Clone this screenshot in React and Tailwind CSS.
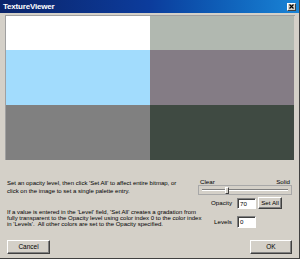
export default function App() {
  const bevel =
    "border border-t-white border-l-white border-b-[#404040] border-r-[#404040] shadow-[inset_-1px_-1px_0_#808080]";
  return (
    <div
      className="w-[300px] h-[259px] bg-[#d4d0c8] flex flex-col border-b border-b-[#404040] border-r border-r-[#404040]"
      style={{ fontFamily: '"Liberation Sans", Arial, sans-serif' }}
    >
      {/* Title bar */}
      <div className="h-[13px] flex items-center justify-between pl-[3px] pr-[3px] bg-gradient-to-r from-[#0a246a] via-[#0c3c9c] to-[#1a84d6]">
        <span className="text-white font-bold text-[8px] leading-none tracking-[-0.2px]">TextureViewer</span>
        <div className="w-[9px] h-[8px] bg-[#d4d0c8] border border-t-white border-l-white border-b-[#404040] border-r-[#404040] flex items-center justify-center">
          <svg width="5" height="5" viewBox="0 0 5 5">
            <path d="M0.5 0.5 L4.5 4.5 M4.5 0.5 L0.5 4.5" stroke="black" strokeWidth="1.2" />
          </svg>
        </div>
      </div>

      {/* Image area */}
      <div className="ml-[5px] mt-[2px] w-[290px] h-[145px] border-l border-t border-l-[#a0a0a0] border-t-[#a0a0a0] bg-[#d4d0c8]">
        <div className="grid grid-cols-[144px_144px] grid-rows-[34px_55px_55px] w-[288px]">
          <div className="bg-white" />
          <div className="bg-[#b1b8b0]" />
          <div className="bg-[#a2dcfd]" />
          <div className="bg-[#847c85]" />
          <div className="bg-[#808080]" />
          <div className="bg-[#3f4a42]" />
        </div>
      </div>

      {/* Lower area */}
      <div className="flex flex-1">
        <div className="pl-[7px] pt-[19px] text-[6px] leading-[8px] text-black w-[190px] whitespace-nowrap">
          <p>Set an opacity level, then click 'Set All' to affect entire bitmap, or</p>
          <p>click on the image to set a single palette entry.</p>
          <p className="mt-[14px] leading-[6px]">
            If a value is entered in the 'Level' field, 'Set All' creates a gradation from
          </p>
          <p className="leading-[6px]">fully transparent to the Opacity level using color index 0 to the color index</p>
          <p className="leading-[6px]">in 'Levels'.&nbsp; All other colors are set to the Opacity specified.</p>
        </div>
        <div className="flex flex-col ml-[8px] w-[94px] pt-[18px] text-[6.2px] text-black">
          <div className="flex justify-between px-[2px] leading-[7px]">
            <span>Clear</span>
            <span>Solid</span>
          </div>
          <div className="relative h-[10px] border border-[#a8a8a8] flex items-center px-[3px]">
            <div className="w-full h-[2px] border-t border-t-[#808080] border-b border-b-white" />
            <div className="absolute left-[26px] top-[1px] w-[4px] h-[7px] bg-[#d4d0c8] border border-t-white border-l-white border-b-[#404040] border-r-[#404040]" />
          </div>
          <div className="flex items-center mt-[2px] h-[12px]">
            <span className="ml-[13px] w-[20px] leading-none">Opacity</span>
            <div className="ml-[6px] w-[19px] h-[11px] bg-white border border-t-[#808080] border-l-[#808080] border-b-white border-r-white shadow-[inset_1px_1px_0_#404040] pl-[2px] leading-[9px]">
              70
            </div>
            <div className={"ml-[2px] w-[24px] h-[12px] flex items-center justify-center leading-none " + bevel}>
              Set All
            </div>
          </div>
          <div className="flex items-center mt-[7px] h-[12px]">
            <span className="ml-[16px] w-[17px] leading-none">Levels</span>
            <div className="ml-[6px] w-[19px] h-[12px] bg-white border border-t-[#808080] border-l-[#808080] border-b-white border-r-white shadow-[inset_1px_1px_0_#404040] pl-[2px] leading-[10px]">
              0
            </div>
          </div>
        </div>
      </div>

      {/* Buttons */}
      <div className="flex justify-between pl-[7px] pr-[7px] pb-[4px]">
        <div className={"w-[43px] h-[14px] flex items-center justify-center text-[6.5px] leading-none " + bevel}>
          Cancel
        </div>
        <div className={"w-[42px] h-[14px] flex items-center justify-center text-[6.5px] leading-none " + bevel}>
          OK
        </div>
      </div>
    </div>
  );
}
